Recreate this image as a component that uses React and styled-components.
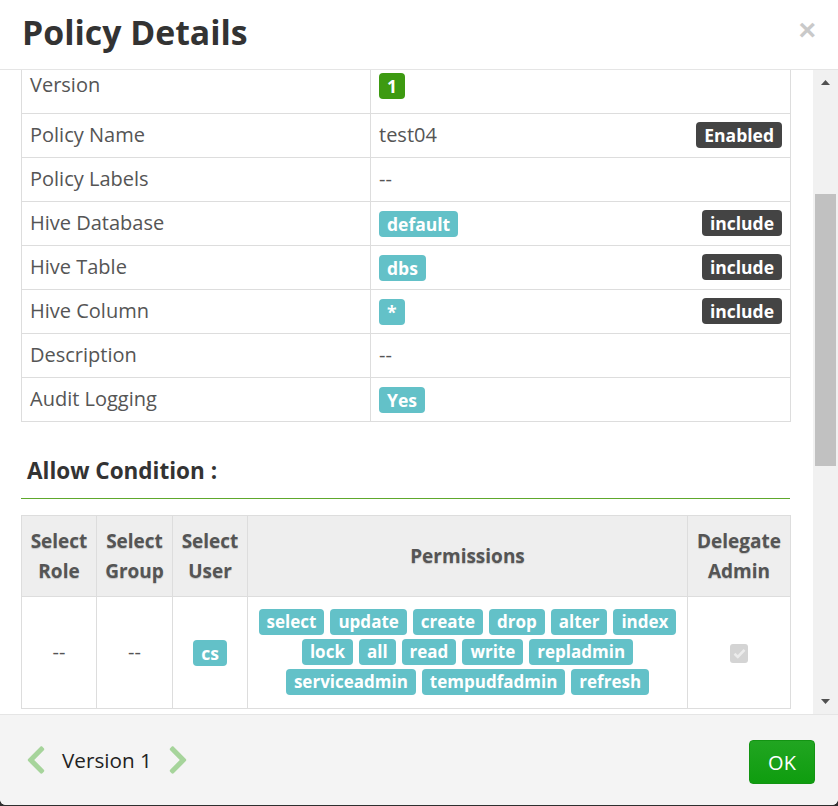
import React, { useLayoutEffect, useRef, useState } from 'react';
import styled, { createGlobalStyle } from 'styled-components';
import { FaChevronLeft, FaChevronRight } from 'react-icons/fa';

const GlobalStyle = createGlobalStyle`
  html, body {
    margin: 0;
    padding: 0;
    background: #2f2f2f;
  }
  body {
    font-family: "Open Sans", "Liberation Sans", sans-serif;
    color: #555;
  }
`;

const Modal = styled.div`
  width: 838px;
  height: 805px;
  background: #fff;
  display: flex;
  flex-direction: column;
  border-radius: 0 0 6px 6px;
  overflow: hidden;
`;

const Header = styled.div`
  height: 69px;
  flex: none;
  border-bottom: 1px solid #e5e5e5;
  display: flex;
  align-items: center;
  justify-content: space-between;
  padding: 0 22px;
`;

const Title = styled.h3`
  margin: -5px 0 0;
  font-size: 33.8px;
  font-weight: 700;
  color: #333;
`;

const Close = styled.button`
  border: none;
  background: none;
  padding: 0;
  font-family: "Liberation Sans", sans-serif;
  font-size: 30px;
  font-weight: 700;
  color: #c9c9c9;
  line-height: 1;
  margin-top: -10px;
  cursor: pointer;
`;

const BodyRow = styled.div`
  flex: 1;
  min-height: 0;
  display: flex;
`;

const Scroller = styled.div`
  flex: 1;
  overflow: hidden;
`;

const ScrollBar = styled.div`
  flex: none;
  width: 25px;
  background: #f1f1f1;
  display: flex;
  flex-direction: column;
`;

const ScrollButton = styled.div`
  flex: none;
  height: 25px;
  display: flex;
  align-items: center;
  justify-content: center;
`;

const Track = styled.div`
  flex: 1;
  position: relative;
`;

const Thumb = styled.div`
  position: absolute;
  left: 2px;
  right: 2px;
  background: #c1c1c1;
`;

const Content = styled.div`
  padding: 15px 23px 2px 21px;
`;

const SectionTitle = styled.h4`
  margin: ${({ first }) => (first ? '20px' : '34px')} 0 16px;
  padding: 0 0 12px 6px;
  font-size: 22.5px;
  line-height: 30px;
  font-weight: 700;
  color: #333;
  border-bottom: 1px solid #5ea82c;
`;

const Table = styled.table`
  width: 100%;
  table-layout: fixed;
  border-collapse: collapse;
  border: 1px solid #ddd;
`;

const Cell = styled.td`
  border: 1px solid #ddd;
  padding: ${({ tall }) => (tall ? '7px 8px 14px' : '7px 8px 8px')};
  font-size: 20px;
  line-height: 28px;
  color: #555;
  vertical-align: middle;
  text-align: ${({ center }) => (center ? 'center' : 'left')};
`;

const HeadCell = styled.th`
  border: 1px solid #ddd;
  background: #eee;
  padding: 10px 4px;
  font-size: 19px;
  line-height: 30px;
  font-weight: 700;
  color: #555;
  text-align: center;
  vertical-align: middle;
  text-shadow: 0 1px 1px rgba(0, 0, 0, 0.18);
`;

const PermCell = styled(Cell)`
  padding: 12px 8px 13px;
`;

const badgeColors = {
  info: '#63c1c8',
  dark: '#444',
  green: '#3d9a11',
};

const Badge = styled.span`
  display: inline-block;
  background: ${({ kind }) => badgeColors[kind || 'info']};
  color: #fff;
  font-size: 17.5px;
  font-weight: 700;
  line-height: 26px;
  height: 26px;
  padding: 0 8px;
  border-radius: 4px;
  vertical-align: top;
  margin-top: ${({ right }) => (right ? '1px' : '2px')};
  float: ${({ right }) => (right ? 'right' : 'none')};
`;

const PermBadge = styled(Badge)`
  font-size: 17px;
  margin-top: 0;
`;

const PermList = styled.div`
  display: flex;
  flex-wrap: wrap;
  justify-content: center;
  gap: 4px 6px;
`;

const CheckBox = styled.span`
  display: inline-flex;
  align-items: center;
  justify-content: center;
  width: 18px;
  height: 19px;
  border-radius: 3px;
  background: #d4d4d4;
  vertical-align: middle;
`;

const Footer = styled.div`
  flex: none;
  height: 90px;
  border-top: 1px solid #e5e5e5;
  background: #f4f4f4;
  display: flex;
  align-items: center;
  justify-content: space-between;
  padding: 0 23px 0 25px;
`;

const Pager = styled.div`
  display: flex;
  align-items: center;
  gap: 15px;
  color: #222;
  font-size: 20.7px;

  svg {
    color: #a6d49b;
    width: 22px;
    height: 32px;
  }
`;

const OkButton = styled.button`
  width: 66px;
  height: 44px;
  margin-top: 4px;
  border: 1px solid #139413;
  border-radius: 4px;
  background: linear-gradient(#21a521, #0f9d0f);
  color: #fff;
  font-family: "Open Sans", "Liberation Sans", sans-serif;
  font-size: 20px;
  cursor: pointer;
`;

const details = [
  { label: 'Policy Type', value: 'Access' },
  { label: 'Policy ID', value: '7' },
  { label: 'Service Name', value: 'hivedev' },
  { label: 'Version', badge: '1', kind: 'green', id: 'version' },
  { label: 'Policy Name', value: 'test04', right: 'Enabled' },
  { label: 'Policy Labels', value: '--' },
  { label: 'Hive Database', badge: 'default', right: 'include' },
  { label: 'Hive Table', badge: 'dbs', right: 'include' },
  { label: 'Hive Column', badge: '*', right: 'include' },
  { label: 'Description', value: '--' },
  { label: 'Audit Logging', badge: 'Yes' },
];

const permissions = [
  'select', 'update', 'create', 'drop', 'alter', 'index',
  'lock', 'all', 'read', 'write', 'repladmin',
  'serviceadmin', 'tempudfadmin', 'refresh',
];

function CheckIcon() {
  return (
    <svg width="13" height="11" viewBox="0 0 13 11">
      <path d="M1.5 5.8L4.8 9L11.5 1.8" fill="none" stroke="#ececec" strokeWidth="2.6" />
    </svg>
  );
}

function Arrow({ down }) {
  return (
    <svg width="9" height="5" viewBox="0 0 9 5">
      <path d={down ? 'M0 0H9L4.5 5z' : 'M4.5 0L9 5H0z'} fill="#505050" />
    </svg>
  );
}

function ConditionTable({ rows }) {
  return (
    <Table>
      <colgroup>
        <col style={{ width: 75 }} />
        <col style={{ width: 76 }} />
        <col style={{ width: 75 }} />
        <col style={{ width: 440 }} />
        <col style={{ width: 103 }} />
      </colgroup>
      <thead>
        <tr>
          <HeadCell>Select<br />Role</HeadCell>
          <HeadCell>Select<br />Group</HeadCell>
          <HeadCell>Select<br />User</HeadCell>
          <HeadCell>Permissions</HeadCell>
          <HeadCell>Delegate<br />Admin</HeadCell>
        </tr>
      </thead>
      <tbody>{rows}</tbody>
    </Table>
  );
}

function EmptyRow() {
  return (
    <tr>
      <Cell center>--</Cell>
      <Cell center>--</Cell>
      <Cell center>--</Cell>
      <Cell center>--</Cell>
      <Cell center>--</Cell>
    </tr>
  );
}

export default function App() {
  const bodyRef = useRef(null);
  const versionRef = useRef(null);
  const trackRef = useRef(null);
  const [thumb, setThumb] = useState({ top: 0, height: 0 });

  useLayoutEffect(() => {
    const body = bodyRef.current;
    const row = versionRef.current;
    const track = trackRef.current;
    if (!body || !row || !track) return;
    const offset = row.getBoundingClientRect().top - body.getBoundingClientRect().top;
    body.scrollTop = offset + 6;
    const len = track.clientHeight;
    const height = Math.round((len * body.clientHeight) / body.scrollHeight);
    const max = body.scrollHeight - body.clientHeight;
    const top = max > 0 ? Math.round(((len - height) * body.scrollTop) / max) : 0;
    setThumb({ top, height });
  }, []);

  return (
    <>
      <GlobalStyle />
      <Modal>
        <Header>
          <Title>Policy Details</Title>
          <Close>×</Close>
        </Header>
        <BodyRow>
          <Scroller ref={bodyRef}>
            <Content>
              <SectionTitle first>Policy Details :</SectionTitle>
              <Table>
                <colgroup>
                  <col style={{ width: 349 }} />
                  <col style={{ width: 420 }} />
                </colgroup>
                <tbody>
                  {details.map((d) => (
                    <tr key={d.label} ref={d.id === 'version' ? versionRef : undefined}>
                      <Cell tall={d.id === 'version'}>{d.label}</Cell>
                      <Cell tall={d.id === 'version'}>
                        {d.right && <Badge kind="dark" right>{d.right}</Badge>}
                        {d.badge ? <Badge kind={d.kind}>{d.badge}</Badge> : d.value}
                      </Cell>
                    </tr>
                  ))}
                </tbody>
              </Table>

              <SectionTitle>Allow Condition :</SectionTitle>
              <ConditionTable
                rows={
                  <tr>
                    <Cell center>--</Cell>
                    <Cell center>--</Cell>
                    <Cell center><Badge>cs</Badge></Cell>
                    <PermCell center>
                      <PermList>
                        {permissions.map((p) => (
                          <PermBadge key={p}>{p}</PermBadge>
                        ))}
                      </PermList>
                    </PermCell>
                    <Cell center>
                      <CheckBox><CheckIcon /></CheckBox>
                    </Cell>
                  </tr>
                }
              />

              <SectionTitle>Exclude from Allow Conditions :</SectionTitle>
              <ConditionTable rows={<EmptyRow />} />

              <SectionTitle>Deny Condition :</SectionTitle>
              <ConditionTable rows={<EmptyRow />} />

              <SectionTitle>Exclude from Deny Conditions :</SectionTitle>
            </Content>
          </Scroller>
          <ScrollBar>
            <ScrollButton><Arrow /></ScrollButton>
            <Track ref={trackRef}>
              <Thumb style={{ top: thumb.top, height: thumb.height }} />
            </Track>
            <ScrollButton><Arrow down /></ScrollButton>
          </ScrollBar>
        </BodyRow>
        <Footer>
          <Pager>
            <FaChevronLeft />
            <span>Version 1</span>
            <FaChevronRight />
          </Pager>
          <OkButton>OK</OkButton>
        </Footer>
      </Modal>
    </>
  );
}
